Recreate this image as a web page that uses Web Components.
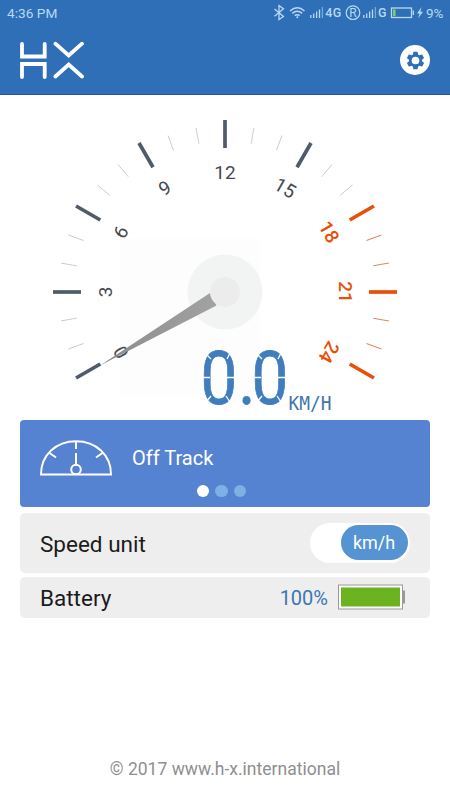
<!DOCTYPE html>
<html lang="en">
<head>
<meta charset="utf-8">
<meta name="viewport" content="width=device-width, initial-scale=1">
<title>H-X</title>
<style>
  html, body { height:100%; margin:0; }
  body { background:#fff; font-family:Roboto, "Open Sans", sans-serif; color:#1b1b1b; overflow:hidden; }
</style>
</head>
<body>
<hx-app>
  <hx-status slot="top" time="4:36 PM"></hx-status>
  <hx-header slot="top"></hx-header>
  <hx-gauge value="0.0" unit="KM/H"></hx-gauge>
  <hx-track>Off Track</hx-track>
  <hx-row style="--row-height:60px; --row-gap:5.5px">Speed unit<hx-switch slot="end">km/h</hx-switch></hx-row>
  <hx-row style="--row-height:40.5px; --row-gap:4.5px">Battery<hx-battery slot="end">100%</hx-battery></hx-row>
  <span slot="footer">© 2017 www.h-x.international</span>
</hx-app>

<script>
class HxElement extends HTMLElement {
  constructor(){
    super();
    this.attachShadow({ mode: 'open' });
  }
  connectedCallback(){
    this.shadowRoot.innerHTML = this.render();
  }
}

class HxApp extends HxElement {
  render(){
    return `
      <style>
        :host{ display:flex; flex-direction:column; height:100vh; }
        .top{ height:94px; background:#2e6fb7; border-bottom:1px solid #205a9c; }
        main{ flex:1; padding:0 20px; }
        footer{ padding:0 0 20px; text-align:center; font-size:17.550px; line-height:22px; color:#8f8f8f; }
      </style>
      <div class="top"><slot name="top"></slot></div>
      <main><slot></slot></main>
      <footer><slot name="footer"></slot></footer>`;
  }
}

class HxStatus extends HxElement {
  bars(x){
    return [3, 4.500, 6.500, 8.500, 11].map((h, i) => `<path d="M${x + i * 2.9} 18v${-h}" opacity="${i === 4 ? .55 : 1}"/>`).join('');
  }
  render(){
    return `
      <style>
        :host{ display:flex; justify-content:space-between; align-items:center; height:26px; padding-left:7px; color:#b9d8f4; font-size:13.700px; }
        svg{ display:block; width:180px; height:26px; }
        text{ fill:currentColor; font-size:12.500px; }
      </style>
      <span>${this.getAttribute('time')}</span>
      <svg viewBox="270 0 180 26" fill="none" stroke="currentColor" stroke-width="1.300">
        <path d="M274.500 9l9 7.500-4.500 3V5.600l4.500 3.200-9 7.500"/>
        <path d="M290 11q7.200-6.400 14.500 0M292.300 13.300q4.900-4 9.900 0M294.700 15.700q2.500-2 5 0" stroke-width="1.500"/>
        <circle cx="297.300" cy="17.300" r="1" fill="currentColor" stroke="none"/>
        ${this.bars(310.8)}
        <circle cx="353" cy="12.700" r="6.800" stroke-width="1.200"/>
        ${this.bars(363.8)}
        <rect x="391.500" y="8" width="20" height="9.500"/>
        <path d="M413.300 10.500v4.500"/>
        <rect x="393" y="9.400" width="2.600" height="6.700" fill="#74d06d" stroke="none"/>
        <path d="M421.500 7l-4.500 6.500h2.700l-1.700 5 5-6.700h-2.700z" fill="currentColor" stroke="none"/>
        <g stroke="none">
          <text x="325.300" y="17.300" font-weight="500" textLength="16">4G</text>
          <text x="349.200" y="17" style="font-size:12px">R</text>
          <text x="378" y="17.300" font-weight="500">G</text>
          <text x="426" y="17.800" style="font-size:13.200px" textLength="17.500" lengthAdjust="spacingAndGlyphs">9%</text>
        </g>
      </svg>`;
  }
}

class HxHeader extends HxElement {
  render(){
    return `
      <style>
        :host{ display:flex; justify-content:space-between; align-items:center; height:68px; padding:0 20px; }
        svg{ display:block; }
        .settings{ width:30px; height:30px; padding:0; border:0; border-radius:50%; background:#fff; display:grid; place-items:center; }
      </style>
      <svg width="65" height="38" viewBox="0 0 65 38" fill="none" stroke="#fff" stroke-width="3.800" stroke-linecap="round">
        <path d="M2 2.900V15.500H24.700V2.900M2 36V23H24.700V36"/>
        <path d="M35.400 2.700L48.700 14.500 62 2.700M35.400 35.500L48.700 23.500 62 35.500"/>
      </svg>
      <button class="settings" aria-label="Settings">
        <svg width="21" height="21" viewBox="0 0 24 24" fill="#2e6fb7">
          <path d="M19.430 12.980c.04-.32.07-.64.07-.98s-.03-.66-.07-.98l2.110-1.650c.19-.15.24-.42.12-.64l-2-3.460c-.12-.22-.39-.3-.61-.22l-2.490 1c-.52-.4-1.080-.73-1.690-.98l-.38-2.650A.49.49 0 0 0 14 2h-4c-.25 0-.46.18-.49.42l-.38 2.650c-.61.25-1.170.59-1.690.98l-2.490-1c-.23-.09-.49 0-.61.22l-2 3.460c-.13.22-.07.49.12.64l2.110 1.650c-.04.32-.07.65-.07.98s.03.66.07.98l-2.110 1.650c-.19.15-.24.42-.12.64l2 3.460c.12.22.39.3.61.22l2.490-1c.52.4 1.080.73 1.690.98l.38 2.650c.03.24.24.42.49.42h4c.25 0 .46-.18.49-.42l.38-2.650c.61-.25 1.170-.59 1.690-.98l2.490 1c.23.09.49 0 .61-.22l2-3.460c.12-.22.07-.49-.12-.64zM12 16.400a4.400 4.400 0 1 1 0-8.800 4.400 4.400 0 0 1 0 8.800z"/>
        </svg>
      </button>`;
  }
}

class HxGauge extends HxElement {
  // ticks every 10 degrees, a labelled one every third
  ticks(){
    let out = '';
    for (let i = 0; i <= 24; i++){
      const angle = -120 + i * 10;
      const hot = i >= 18;
      const major = i % 3 === 0;
      const cls = (major ? 'major' : 'minor') + (hot ? ' hot' : '');
      out += `<g transform="rotate(${angle} 205 197)" class="${cls}">`;
      out += major ? '<path d="M205 25v28"/>' : '<path d="M205 30.500v16"/>';
      if (major) out += `<text x="205" y="83.500">${i}</text>`;
      out += '</g>';
    }
    return out;
  }
  render(){
    return `
      <style>
        :host{ display:block; height:325px; }
        svg{ display:block; width:410px; height:325px; overflow:visible; }
        path{ fill:none; }
        .major path{ stroke:#505b69; stroke-width:3.700; }
        .minor path{ stroke:#c4c4c4; stroke-width:.8; }
        .major.hot path{ stroke:#e8500a; }
        .minor.hot path{ stroke:#d98a62; stroke-width:1; }
        .major text{ font-size:19px; text-anchor:middle; fill:#45494f; }
        .major.hot text{ fill:#e8500a; font-weight:500; }
        .value{ font-size:74.500px; fill:#3f7dbd; stroke:#3f7dbd; stroke-width:.8; }
        .unit{ font:20px "DejaVu Sans Mono", monospace; fill:#3f75a8; }
        .gap path{ stroke:#fff; stroke-width:1.300; }
      </style>
      <svg viewBox="0 0 410 325">
        <defs>
          <linearGradient id="needle"><stop offset="0" stop-color="#8b8b8b"/><stop offset="1" stop-color="#a2a2a2"/></linearGradient>
        </defs>
        <rect x="100" y="144" width="140" height="156" fill="#fdfdfd"/>
        <circle cx="205" cy="197" r="37.500" fill="#f2f4f4"/>
        ${this.ticks()}
        <polygon points="80,270.500 190,198 196.500,210.500" fill="url(#needle)"/>
        <circle cx="205" cy="197" r="15" fill="#ececec"/>
        <g class="value">
          <text transform="translate(180.500 309) scale(.88 1)" x="0 43 58">${this.getAttribute('value')}</text>
        </g>
        <g class="gap">
          <path d="M182 282.500h8M206 282.500h9M233 282.500h8M257 282.500h9M186 259l5 5M211 256l-4 8M186 307l5-6M210 307l-4-6M237 259l5 5M262 256l-4 8M237 307l5-6M261 307l-4-6"/>
        </g>
        <text class="unit" x="268.500" y="315" textLength="43" lengthAdjust="spacingAndGlyphs">${this.getAttribute('unit')}</text>
      </svg>`;
  }
}

class HxTrack extends HxElement {
  render(){
    return `
      <style>
        :host{ display:flex; flex-direction:column; height:87px; border-radius:4px; background:#5682d2; color:#fff; }
        .main{ display:flex; align-items:center; gap:20px; padding:20px 20px 0; height:36px; font-size:20px; }
        .dots{ display:flex; justify-content:center; gap:6px; padding:8.500px 7px 0 0; }
        .dots i{ width:12.600px; height:12.600px; border-radius:50%; background:#7fb0e3; }
        .dots i:first-child{ background:#fff; }
      </style>
      <div class="main">
        <svg width="72" height="36" viewBox="0 0 72 36" fill="none" stroke="#fff" stroke-width="2">
          <path d="M1 34.500C1 15 16 1.200 36 1.200S71 15 71 34.500z"/>
          <path d="M36 1v8M9.500 13l6.500 4.500M62.500 13L56 17.500M36 13v12.500"/>
          <circle cx="36" cy="29.500" r="4.800"/>
        </svg>
        <slot></slot>
      </div>
      <div class="dots"><i></i><i></i><i></i></div>`;
  }
}

class HxRow extends HxElement {
  render(){
    return `
      <style>
        :host{ display:flex; justify-content:space-between; align-items:center; box-sizing:border-box; height:var(--row-height, 60px); margin-top:var(--row-gap, 5px); padding:0 20px; border-radius:5px; background:#eee; font-size:22.500px; }
        span{ padding-top:2px; }
      </style>
      <span><slot></slot></span>
      <slot name="end"></slot>`;
  }
}

class HxSwitch extends HxElement {
  render(){
    return `
      <style>
        :host{ display:flex; justify-content:flex-end; box-sizing:border-box; width:100px; height:40px; padding:2.500px; border-radius:20px; background:#fff; }
        .knob{ width:67px; border-radius:18px; background:#5593d3; color:#fff; font-size:18px; display:grid; place-items:center; }
      </style>
      <span class="knob"><slot></slot></span>`;
  }
}

class HxBattery extends HxElement {
  render(){
    return `
      <style>
        :host{ display:flex; align-items:center; gap:10px; padding-right:5px; font-size:20px; color:#3a77b5; }
        span{ padding-top:2px; }
        svg{ display:block; }
      </style>
      <span><slot></slot></span>
      <svg width="67" height="26" viewBox="0 0 67 26">
        <rect x=".5" y="1" width="64" height="24" fill="#fff" stroke="#999"/>
        <rect x="3" y="3.500" width="59" height="19" fill="#6cb41f"/>
        <rect x="64.500" y="6.500" width="2.500" height="13" fill="#999"/>
      </svg>`;
  }
}

customElements.define('hx-app', HxApp);
customElements.define('hx-status', HxStatus);
customElements.define('hx-header', HxHeader);
customElements.define('hx-gauge', HxGauge);
customElements.define('hx-track', HxTrack);
customElements.define('hx-row', HxRow);
customElements.define('hx-switch', HxSwitch);
customElements.define('hx-battery', HxBattery);
</script>
</body>
</html>
